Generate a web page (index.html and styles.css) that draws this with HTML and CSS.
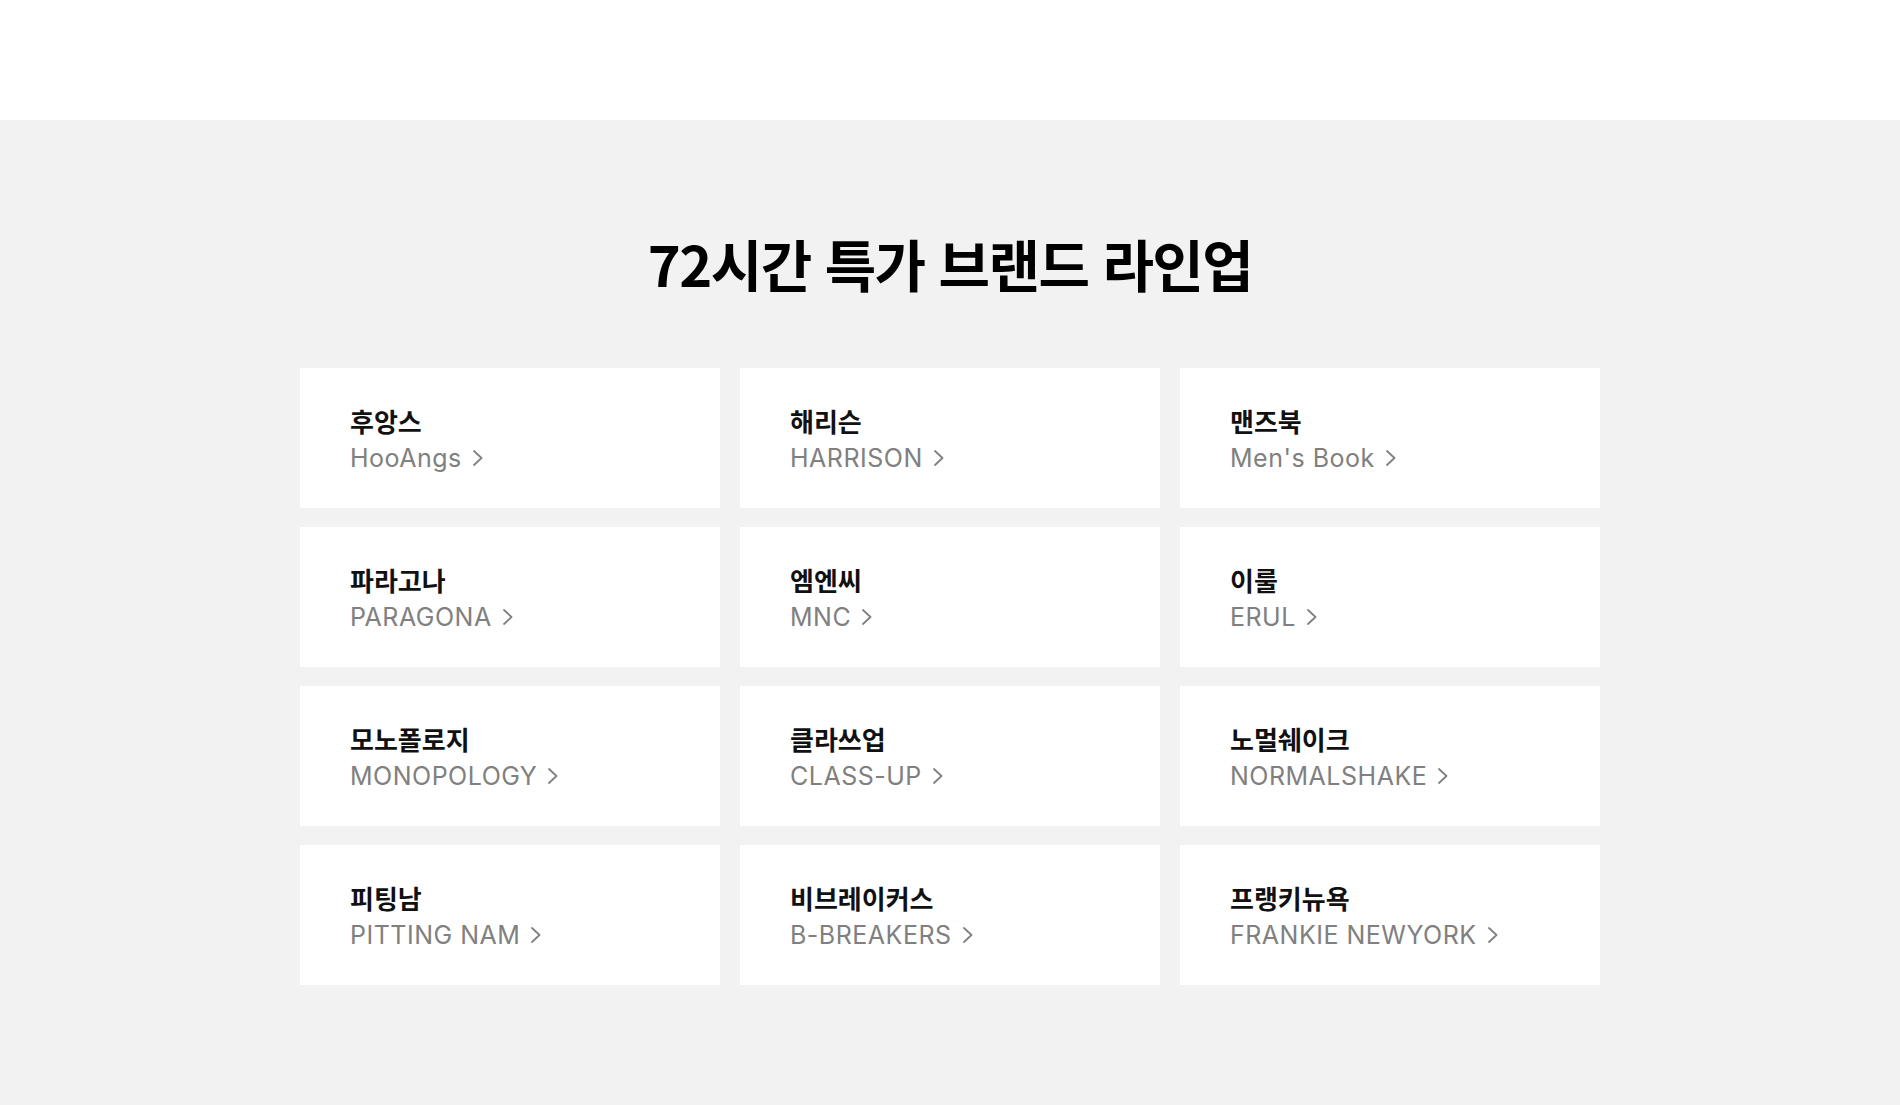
FILE: index.html
```html
<!DOCTYPE html>
<html lang="ko">
<head>
<meta charset="utf-8">
<title>72시간 특가 브랜드 라인업</title>
<link rel="stylesheet" href="styles.css">
</head>
<body>
<header class="top"></header>
<section class="lineup">
  <h1 class="lineup-title">72시간 특가 브랜드 라인업</h1>
  <div class="brand-grid">
    <a class="brand-card" href="#"><span class="brand-ko">후앙스</span><span class="brand-en">HooAngs<svg class="chev" viewBox="0 0 12 16" width="12" height="16"><polyline points="2,1 9.5,8 2,15"/></svg></span></a>
    <a class="brand-card" href="#"><span class="brand-ko">해리슨</span><span class="brand-en">HARRISON<svg class="chev" viewBox="0 0 12 16" width="12" height="16"><polyline points="2,1 9.5,8 2,15"/></svg></span></a>
    <a class="brand-card" href="#"><span class="brand-ko">맨즈북</span><span class="brand-en">Men's Book<svg class="chev" viewBox="0 0 12 16" width="12" height="16"><polyline points="2,1 9.5,8 2,15"/></svg></span></a>
    <a class="brand-card" href="#"><span class="brand-ko">파라고나</span><span class="brand-en">PARAGONA<svg class="chev" viewBox="0 0 12 16" width="12" height="16"><polyline points="2,1 9.5,8 2,15"/></svg></span></a>
    <a class="brand-card" href="#"><span class="brand-ko">엠엔씨</span><span class="brand-en">MNC<svg class="chev" viewBox="0 0 12 16" width="12" height="16"><polyline points="2,1 9.5,8 2,15"/></svg></span></a>
    <a class="brand-card" href="#"><span class="brand-ko">이룰</span><span class="brand-en">ERUL<svg class="chev" viewBox="0 0 12 16" width="12" height="16"><polyline points="2,1 9.5,8 2,15"/></svg></span></a>
    <a class="brand-card" href="#"><span class="brand-ko">모노폴로지</span><span class="brand-en">MONOPOLOGY<svg class="chev" viewBox="0 0 12 16" width="12" height="16"><polyline points="2,1 9.5,8 2,15"/></svg></span></a>
    <a class="brand-card" href="#"><span class="brand-ko">클라쓰업</span><span class="brand-en">CLASS-UP<svg class="chev" viewBox="0 0 12 16" width="12" height="16"><polyline points="2,1 9.5,8 2,15"/></svg></span></a>
    <a class="brand-card" href="#"><span class="brand-ko">노멀쉐이크</span><span class="brand-en">NORMALSHAKE<svg class="chev" viewBox="0 0 12 16" width="12" height="16"><polyline points="2,1 9.5,8 2,15"/></svg></span></a>
    <a class="brand-card" href="#"><span class="brand-ko">피팅남</span><span class="brand-en">PITTING NAM<svg class="chev" viewBox="0 0 12 16" width="12" height="16"><polyline points="2,1 9.5,8 2,15"/></svg></span></a>
    <a class="brand-card" href="#"><span class="brand-ko">비브레이커스</span><span class="brand-en">B-BREAKERS<svg class="chev" viewBox="0 0 12 16" width="12" height="16"><polyline points="2,1 9.5,8 2,15"/></svg></span></a>
    <a class="brand-card" href="#"><span class="brand-ko">프랭키뉴욕</span><span class="brand-en">FRANKIE NEWYORK<svg class="chev" viewBox="0 0 12 16" width="12" height="16"><polyline points="2,1 9.5,8 2,15"/></svg></span></a>
  </div>
</section>
</body>
</html>
```

FILE: styles.css
```css
* { box-sizing: border-box; }
html, body { margin: 0; padding: 0; }
body {
  font-family: "Noto Sans CJK KR", "Noto Sans", sans-serif;
  background: #f2f2f2;
  color: #111;
}
.top {
  height: 120px;
  background: #fff;
}
.lineup {
  background: #f2f2f2;
  min-height: 985px;
  padding-top: 108px;
}
.lineup-title {
  margin: 0 0 70px;
  text-align: center;
  font-size: 56px;
  line-height: 70px;
  font-weight: 700;
  letter-spacing: -1.6px;
  color: #000;
}
.brand-grid {
  width: 1300px;
  margin: 0 auto;
  display: grid;
  grid-template-columns: repeat(3, 420px);
  grid-auto-rows: 140px;
  column-gap: 20px;
  row-gap: 19px;
}
.brand-card {
  background: #fff;
  display: flex;
  flex-direction: column;
  justify-content: center;
  padding: 2px 0 0 50px;
  text-decoration: none;
}
.brand-ko {
  font-family: "Noto Sans CJK KR", sans-serif;
  font-size: 26px;
  line-height: 30px;
  font-weight: 700;
  color: #111;
}
.brand-en {
  margin-top: 7px;
  font-family: Inter, "Liberation Sans", sans-serif;
  font-size: 25px;
  line-height: 30px;
  font-weight: 400;
  letter-spacing: 0.5px;
  color: #808080;
  display: flex;
  align-items: center;
}
.chev {
  margin-left: 10px;
  fill: none;
  stroke: #808080;
  stroke-width: 1.8;
  stroke-linecap: round;
  stroke-linejoin: round;
}
```
